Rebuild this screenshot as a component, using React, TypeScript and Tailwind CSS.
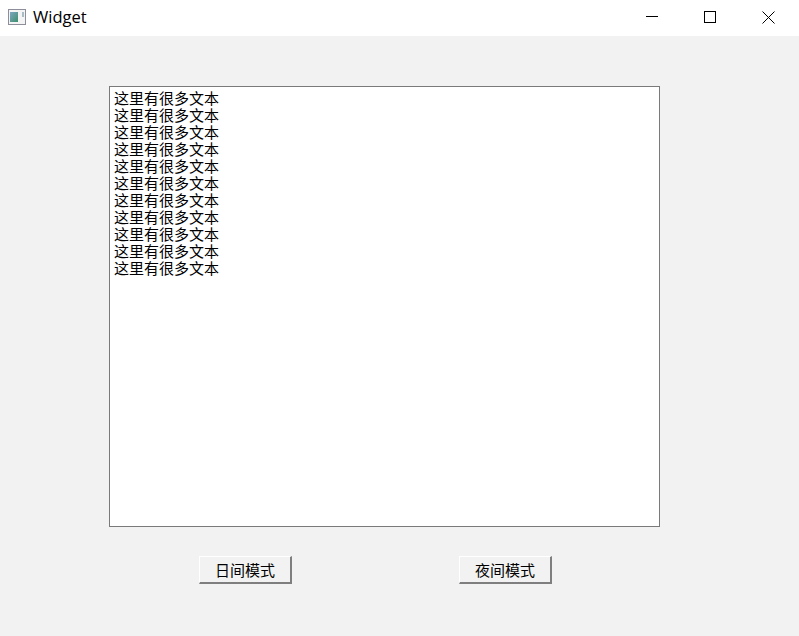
const cjk = "font-['Noto_Sans_CJK_SC','Noto_Sans_CJK_JP',sans-serif]";

const text = Array.from({ length: 11 }, () => "这里有很多文本").join("\n");

function Btn({ label, className }: { label: string; className: string }) {
  return (
    <button
      className={`${className} ${cjk} h-[28px] flex items-center justify-center bg-[#f2f2f2] border-t border-l border-t-white border-l-white border-r-2 border-b-2 border-r-[#7f7f7f] border-b-[#7f7f7f] text-[15px] leading-none text-black`}
    >
      {label}
    </button>
  );
}

export default function App() {
  return (
    <div className="w-[799px] h-[636px] bg-[#f2f2f2] flex flex-col overflow-hidden">
      <div className="h-9 bg-white flex items-center shrink-0">
        <svg width="18" height="16" viewBox="0 0 18 16" className="ml-2 shrink-0 -mt-[3px]">
          <rect x="0.5" y="0.5" width="17" height="15" fill="#f4f4f4" stroke="#8e8e9a" />
          <defs>
            <linearGradient id="g" x1="0" y1="0" x2="1" y2="1">
              <stop offset="0" stopColor="#7fa6c4" />
              <stop offset="1" stopColor="#3e8f6a" />
            </linearGradient>
          </defs>
          <rect x="2" y="3" width="8" height="10" fill="url(#g)" />
          <rect x="14" y="3" width="2" height="5" fill="#a9bcc4" />
        </svg>
        <span className="ml-[7px] -mt-px font-['Open_Sans',sans-serif] text-[16.5px] text-black">Widget</span>
        <div className="ml-auto flex items-center h-full -mt-[2px]">
          <div className="w-[58px] h-full flex items-center justify-center">
            <svg width="12" height="12" viewBox="0 0 12 12"><path d="M0 5.5H12" stroke="#000" /></svg>
          </div>
          <div className="w-[58px] h-full flex items-center justify-center">
            <svg width="12" height="12" viewBox="0 0 12 12"><rect x="0.5" y="0.5" width="11" height="11" fill="none" stroke="#000" /></svg>
          </div>
          <div className="w-[59px] h-full flex items-center justify-center mr-px">
            <svg width="13" height="13" viewBox="0 0 13 13"><path d="M0.5 0.5L12.5 12.5M12.5 0.5L0.5 12.5" stroke="#000" /></svg>
          </div>
        </div>
      </div>
      <div className={`ml-[109px] mt-[50px] w-[551px] h-[441px] shrink-0 bg-white border border-[#7a7a7a] pl-[4px] pt-[2px] whitespace-pre-line ${cjk} text-[15px] leading-[17px] text-black`}>
        {text}
      </div>
      <div className="flex mt-[29px]">
        <Btn label="日间模式" className="ml-[199px] w-[93px]" />
        <Btn label="夜间模式" className="ml-[167px] w-[93px]" />
      </div>
    </div>
  );
}
